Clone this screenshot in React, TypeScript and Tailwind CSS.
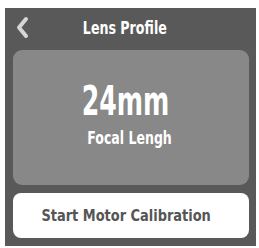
import React from "react";

const font = { fontFamily: '"DejaVu Sans Condensed", "DejaVu Sans", sans-serif' };

export default function App() {
  return (
    <div className="w-[259px] h-[248px] bg-white pt-[8px] pl-[5px]" style={font}>
      <div className="w-[251px] h-[238px] bg-[#595959] flex flex-col px-[8px] pb-[8px]">
        <div className="h-[42px] relative flex items-center justify-center">
          <svg className="absolute left-[2px] top-[8px]" width="14" height="23" viewBox="0 0 14 23">
            <path d="M11 3 L4 11.5 L11 20" fill="none" stroke="#d6d6d6" strokeWidth="4" strokeLinecap="round" strokeLinejoin="round" />
          </svg>
          <span className="text-white font-bold text-[18px] leading-none scale-x-[0.78] inline-block mt-[-3px] mr-[12px]">Lens Profile</span>
        </div>
        <div className="h-[135px] w-[236px] rounded-[9px] bg-[#888888] flex flex-col items-center justify-center pb-[8px]">
          <span className="text-white font-bold text-[40px] leading-none scale-x-[0.7] inline-block mr-[10px]">24mm</span>
          <span className="text-white font-bold text-[17px] leading-none scale-x-[0.82] inline-block mt-[9px] mr-[3px]">Focal Lengh</span>
        </div>
        <div className="mt-[8px] h-[45px] w-[236px] rounded-[8px] bg-white flex items-center justify-center">
          <span className="text-[#555555] font-bold text-[16px] leading-none scale-x-[0.9] inline-block mr-[10px]">Start Motor Calibration</span>
        </div>
      </div>
    </div>
  );
}
